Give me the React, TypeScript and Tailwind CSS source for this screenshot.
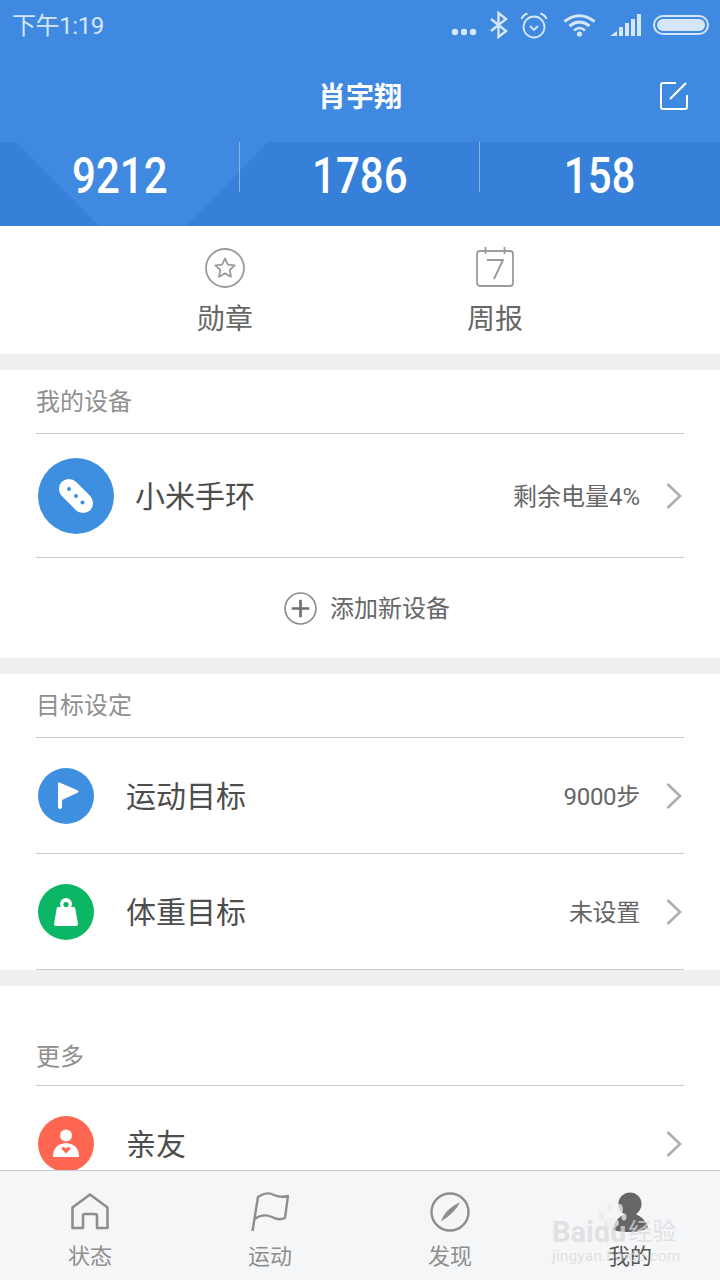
import React from 'react';

const CJK = "font-['Roboto','Noto_Sans_CJK_SC',sans-serif]";

const Chevron = () => (
  <svg width="16" height="26" viewBox="0 0 16 26" fill="none" className="shrink-0">
    <path d="M1.5 1 L14 13 L1.5 25" stroke="#adadad" strokeWidth="2.6" />
  </svg>
);

const StatusIcons = () => (
  <div className="flex items-center">
    <svg width="26" height="8" viewBox="0 0 26 8" className="mt-[13px] mr-[12px]" fill="#d6e6f9">
      <circle cx="4" cy="4" r="3.2" /><circle cx="13" cy="4" r="3.2" /><circle cx="22" cy="4" r="3.2" />
    </svg>
    <svg width="20" height="28" viewBox="0 0 20 28" fill="none" stroke="#d6e6f9" strokeWidth="2.4" className="mr-[11px]">
      <path d="M2 8 L17 20 L9.5 26 V2 L17 8 L2 20" />
    </svg>
    <svg width="28" height="27" viewBox="0 0 28 27" fill="none" stroke="#d6e6f9" strokeWidth="1.8" className="mr-[15px]">
      <circle cx="14" cy="15" r="10.5" />
      <path d="M1.5 7 Q3 3 7.5 1.5 M26.5 7 Q25 3 20.5 1.5" strokeWidth="2" />
      <path d="M10 14 L14 18 L18 14" />
    </svg>
    <svg width="33" height="24" viewBox="0 0 33 24" fill="none" stroke="#d6e6f9" strokeWidth="3" className="mr-[14px]">
      <path d="M1.5 8.5 Q16.5 -3 31.5 8.5" />
      <path d="M6.5 13 Q16.5 5 26.5 13" />
      <path d="M11 17.5 Q16.5 12.5 22 17.5" strokeWidth="2.6" />
      <circle cx="16.5" cy="21" r="2.6" fill="#d6e6f9" stroke="none" />
    </svg>
    <svg width="31" height="22" viewBox="0 0 31 22" fill="#d6e6f9" className="mr-[12px]">
      <path d="M0 22 L7 17 V22 Z" />
      <rect x="9" y="13" width="4" height="9" /><rect x="15" y="9" width="4" height="13" />
      <rect x="21" y="5" width="4" height="17" /><rect x="27" y="0" width="4" height="22" />
    </svg>
    <div className="flex h-[20px] w-[56px] items-center rounded-[10px] border-2 border-[#d6e6f9] p-[2px]">
      <div className="h-full w-full rounded-[6px] bg-[#d6e6f9]" />
    </div>
  </div>
);

const EditIcon = () => (
  <svg width="30" height="30" viewBox="0 0 30 30" fill="none" stroke="#fff" strokeWidth="2">
    <path d="M17 2 H4 Q2 2 2 4 V26 Q2 28 4 28 H26 Q28 28 28 26 V14" />
    <path d="M11 18 L27 2" strokeWidth="2.2" />
  </svg>
);

const Stat = ({ value, divider }: { value: string; divider?: boolean }) => (
  <div className="relative flex flex-1 justify-center">
    <span className="mt-[2px] inline-block scale-x-[0.84] text-[50px] leading-[64px] font-medium text-white">{value}</span>
    {divider && <div className="absolute top-0 right-0 h-[50px] w-px bg-[#85b3ea]" />}
  </div>
);

const StarIcon = () => (
  <svg width="40" height="40" viewBox="0 0 40 40" fill="none" stroke="#9b9b9b">
    <circle cx="20" cy="20" r="19" strokeWidth="1.8" />
    <path d="M20 10.5 L22.9 16.6 L29.6 17.4 L24.7 22 L26 28.7 L20 25.4 L14 28.7 L15.3 22 L10.4 17.4 L17.1 16.6 Z" strokeWidth="1.8" strokeLinejoin="round" />
  </svg>
);

const CalendarIcon = () => (
  <svg width="38" height="40" viewBox="0 0 38 40" fill="none" stroke="#9b9b9b" strokeWidth="1.8">
    <rect x="1" y="4" width="36" height="35" rx="3" />
    <path d="M9.5 0 V7 M28.5 0 V7" />
    <path d="M11 13 H27 L18 32" strokeWidth="1.9" />
  </svg>
);

const BandIcon = () => (
  <svg width="36" height="36" viewBox="0 0 36 36">
    <rect x="-2" y="8" width="40" height="20" rx="10" fill="#fff" transform="rotate(45 18 18)" />
    <circle cx="11" cy="11" r="2" fill="#3f8fe0" /><circle cx="18" cy="18" r="2" fill="#3f8fe0" /><circle cx="24.5" cy="24.5" r="2" fill="#3f8fe0" />
  </svg>
);

const FlagIcon = () => (
  <svg width="21" height="27" viewBox="0 0 21 27" className="ml-[5px]">
    <path d="M0 1.5 Q0 0 1.5 0.5 L20 8.5 Q21 9.5 20 10.5 L4 18 V25 A2 2 0 0 1 0 25 Z" fill="#fff" />
  </svg>
);

const BagIcon = () => (
  <svg width="24" height="28" viewBox="0 0 24 28">
    <circle cx="12" cy="6" r="6" fill="#fff" />
    <path d="M4 9 H20 Q21 9 21.2 10 L24 26 Q24 28 22 28 H2 Q0 28 0 26 L2.8 10 Q3 9 4 9 Z" fill="#fff" />
    <circle cx="12" cy="6.5" r="2.6" fill="#0bb765" />
  </svg>
);

const FriendIcon = () => (
  <svg width="28" height="30" viewBox="0 0 28 30">
    <circle cx="14" cy="6.5" r="6" fill="#fff" />
    <path d="M1 28 Q1 15 14 14 Q27 15 27 28 Z" fill="#fff" />
    <path d="M14 24.5 L10 20.5 Q9 18 11.5 18 Q13 18 14 19.5 Q15 18 16.5 18 Q19 18 18 20.5 Z" fill="#ff6753" />
  </svg>
);

const SectionTitle = ({ title, low }: { title: string; low?: boolean }) => (
  <div className={`flex h-[64px] items-center border-b border-[#c9c9c9] text-[24px] leading-none text-[#8f8f8f] ${low ? 'pt-[6px]' : 'pt-[1px]'}`}>{title}</div>
);

const Row = ({ icon, color, label, value, last }: { icon: React.ReactNode; color: string; label: string; value?: string; last?: boolean }) => (
  <div className={`flex h-[116px] items-center pl-[2px] ${last ? '' : 'border-b border-[#c9c9c9]'}`}>
    <div className={`flex h-[56px] w-[56px] shrink-0 items-center justify-center rounded-full ${color}`}>{icon}</div>
    <span className="ml-[32px] flex-1 pt-[2px] text-[30px] leading-none text-[#4d4d4d]">{label}</span>
    {value && <span className="pt-[2px] text-[24px] leading-none tracking-[-0.3px] text-[#666]">{value}</span>}
    <div className="mr-[2px] ml-[26px] flex"><Chevron /></div>
  </div>
);

const Tab = ({ icon, label, active }: { icon: React.ReactNode; label: string; active?: boolean }) => (
  <div className="flex flex-1 flex-col items-center">
    <div className="flex h-[44px] items-center justify-center">{icon}</div>
    <span className={`mt-[9px] text-[22px] leading-[28px] ${active ? 'text-[#555]' : 'text-[#8e8e8e]'}`}>{label}</span>
  </div>
);

const Gap = () => <div className="h-[16px] shrink-0 bg-[#eeeff1]" />;

export default function App() {
  return (
    <div className={`flex h-[1280px] w-[720px] flex-col overflow-hidden bg-white ${CJK}`}>
      <div className="min-h-0 flex-1 overflow-hidden">
        <header className="bg-[#3f8ae0]">
          <div className="flex h-[50px] items-center justify-between pr-[11px] pl-[12px]">
            <span className="pt-[2px] text-[24px] leading-none tracking-[-0.4px] text-[#d6e6f9]">下午1:19</span>
            <StatusIcons />
          </div>
          <div className="relative flex h-[92px] items-center justify-center">
            <span className="mt-[4px] text-[28px] leading-none font-bold text-white">肖宇翔</span>
            <div className="absolute top-[31px] right-[31px]"><EditIcon /></div>
          </div>
          <div className="relative flex h-[84px] bg-[#3680da]">
            <svg width="720" height="84" className="absolute top-0 left-0">
              <path d="M16 0 H268 L186 84 H99 Z" fill="#3f8ae0" />
            </svg>
            <div className="relative flex w-full pl-0">
              <Stat value="9212" divider />
              <Stat value="1786" divider />
              <Stat value="158" />
            </div>
          </div>
        </header>

        <section className="flex h-[128px] pl-[90px]">
          <div className="flex w-[270px] flex-col items-center pt-[22px]">
            <StarIcon />
            <span className="mt-[14px] text-[28px] leading-[36px] text-[#666]">勋章</span>
          </div>
          <div className="flex w-[270px] flex-col items-center pt-[21px]">
            <CalendarIcon />
            <span className="mt-[15px] text-[28px] leading-[36px] text-[#666]">周报</span>
          </div>
        </section>
        <Gap />

        <section className="h-[288px] px-[36px]">
          <SectionTitle title="我的设备" />
          <div className="flex h-[124px] items-center border-b border-[#c9c9c9] pl-[2px]">
            <div className="flex h-[76px] w-[76px] shrink-0 items-center justify-center rounded-full bg-[#3f8fe0]"><BandIcon /></div>
            <span className="ml-[21px] flex-1 pt-[2px] text-[30px] leading-none text-[#4d4d4d]">小米手环</span>
            <span className="pt-[2px] text-[24px] leading-none text-[#666]">剩余电量4%</span>
            <div className="mr-[2px] ml-[26px] flex"><Chevron /></div>
          </div>
          <div className="flex h-[100px] items-center pl-[248px]">
            <svg width="33" height="33" viewBox="0 0 32 32" fill="none" stroke="#8c8c8c">
              <circle cx="16" cy="16" r="15" strokeWidth="1.6" />
              <path d="M7.5 16 H24.5 M16 7.5 V24.5" stroke="#707070" strokeWidth="2.6" />
            </svg>
            <span className="ml-[13px] pt-[2px] text-[24px] leading-none text-[#666]">添加新设备</span>
          </div>
        </section>
        <Gap />

        <section className="px-[36px]">
          <SectionTitle title="目标设定" />
          <Row icon={<FlagIcon />} color="bg-[#3f8fe0]" label="运动目标" value="9000步" />
          <Row icon={<BagIcon />} color="bg-[#0bb765]" label="体重目标" value="未设置" />
        </section>
        <Gap />

        <section className="px-[36px] pt-[36px]">
          <SectionTitle title="更多" low />
          <Row icon={<FriendIcon />} color="bg-[#ff6753]" label="亲友" last />
        </section>
      </div>

      <nav className="relative flex h-[110px] shrink-0 border-t border-[#c8c9cc] bg-[#f5f6f8] pt-[19px]">
        <Tab
          label="状态"
          icon={
            <svg width="38" height="38" viewBox="0 0 38 38" fill="none" stroke="#8e8e8e" strokeWidth="2.6" strokeLinejoin="round">
              <path d="M1.5 14.5 L19 1.5 L36.5 14.5 V35 H26 V23 Q26 21 24 21 H14 Q12 21 12 23 V35 H1.5 Z" />
            </svg>
          }
        />
        <Tab
          label="运动"
          icon={
            <svg width="38" height="40" viewBox="0 0 38 40" fill="none" stroke="#8e8e8e" strokeWidth="2.4" strokeLinejoin="round">
              <path d="M1.5 39 L7 5 Q16 -1 23 3 Q30 6 37 4 L34 26 Q28 29 21 25 Q12 21 3.5 27" />
            </svg>
          }
        />
        <Tab
          label="发现"
          icon={
            <svg width="40" height="40" viewBox="0 0 40 40" fill="none">
              <circle cx="20" cy="20" r="18.5" stroke="#8e8e8e" strokeWidth="2.4" />
              <path d="M30 10 Q26 20 11 29.5 Q14 18 30 10 Z" fill="#8e8e8e" />
            </svg>
          }
        />
        <Tab
          label="我的"
          active
          icon={
            <svg width="36" height="40" viewBox="0 0 36 40" fill="#666">
              <circle cx="18" cy="12" r="11.5" />
              <path d="M1 38 Q3 24 18 20 Q33 24 36 36 Q28 40 18 40 Q8 40 1 38 Z" />
            </svg>
          }
        />
        {/* jingyan watermark over the last tab */}
        <div className="pointer-events-none absolute top-[31px] left-[552px] w-[130px] opacity-75">
          <svg width="32" height="30" viewBox="0 0 32 30" fill="#eceded" className="absolute top-0 left-[45px]">
            <ellipse cx="4.5" cy="13" rx="3" ry="5.5" /><ellipse cx="13" cy="5" rx="3" ry="4.5" />
            <ellipse cx="23" cy="7" rx="3" ry="5" /><ellipse cx="27" cy="15" rx="2.5" ry="3.5" /><ellipse cx="15" cy="21" rx="7" ry="5" />
          </svg>
          <div className="mt-[17px] flex items-end leading-[26px] font-bold whitespace-nowrap text-[#dadbdd]">
            <span className="text-[29px]">Baidu</span>
            <span className="ml-[2px] text-[24px] font-normal">经验</span>
          </div>
          <div className="mt-[3px] text-[15px] leading-[17px] tracking-[0.4px] whitespace-nowrap text-[#dadbdd]">jingyan.baidu.com</div>
        </div>
      </nav>
    </div>
  );
}
